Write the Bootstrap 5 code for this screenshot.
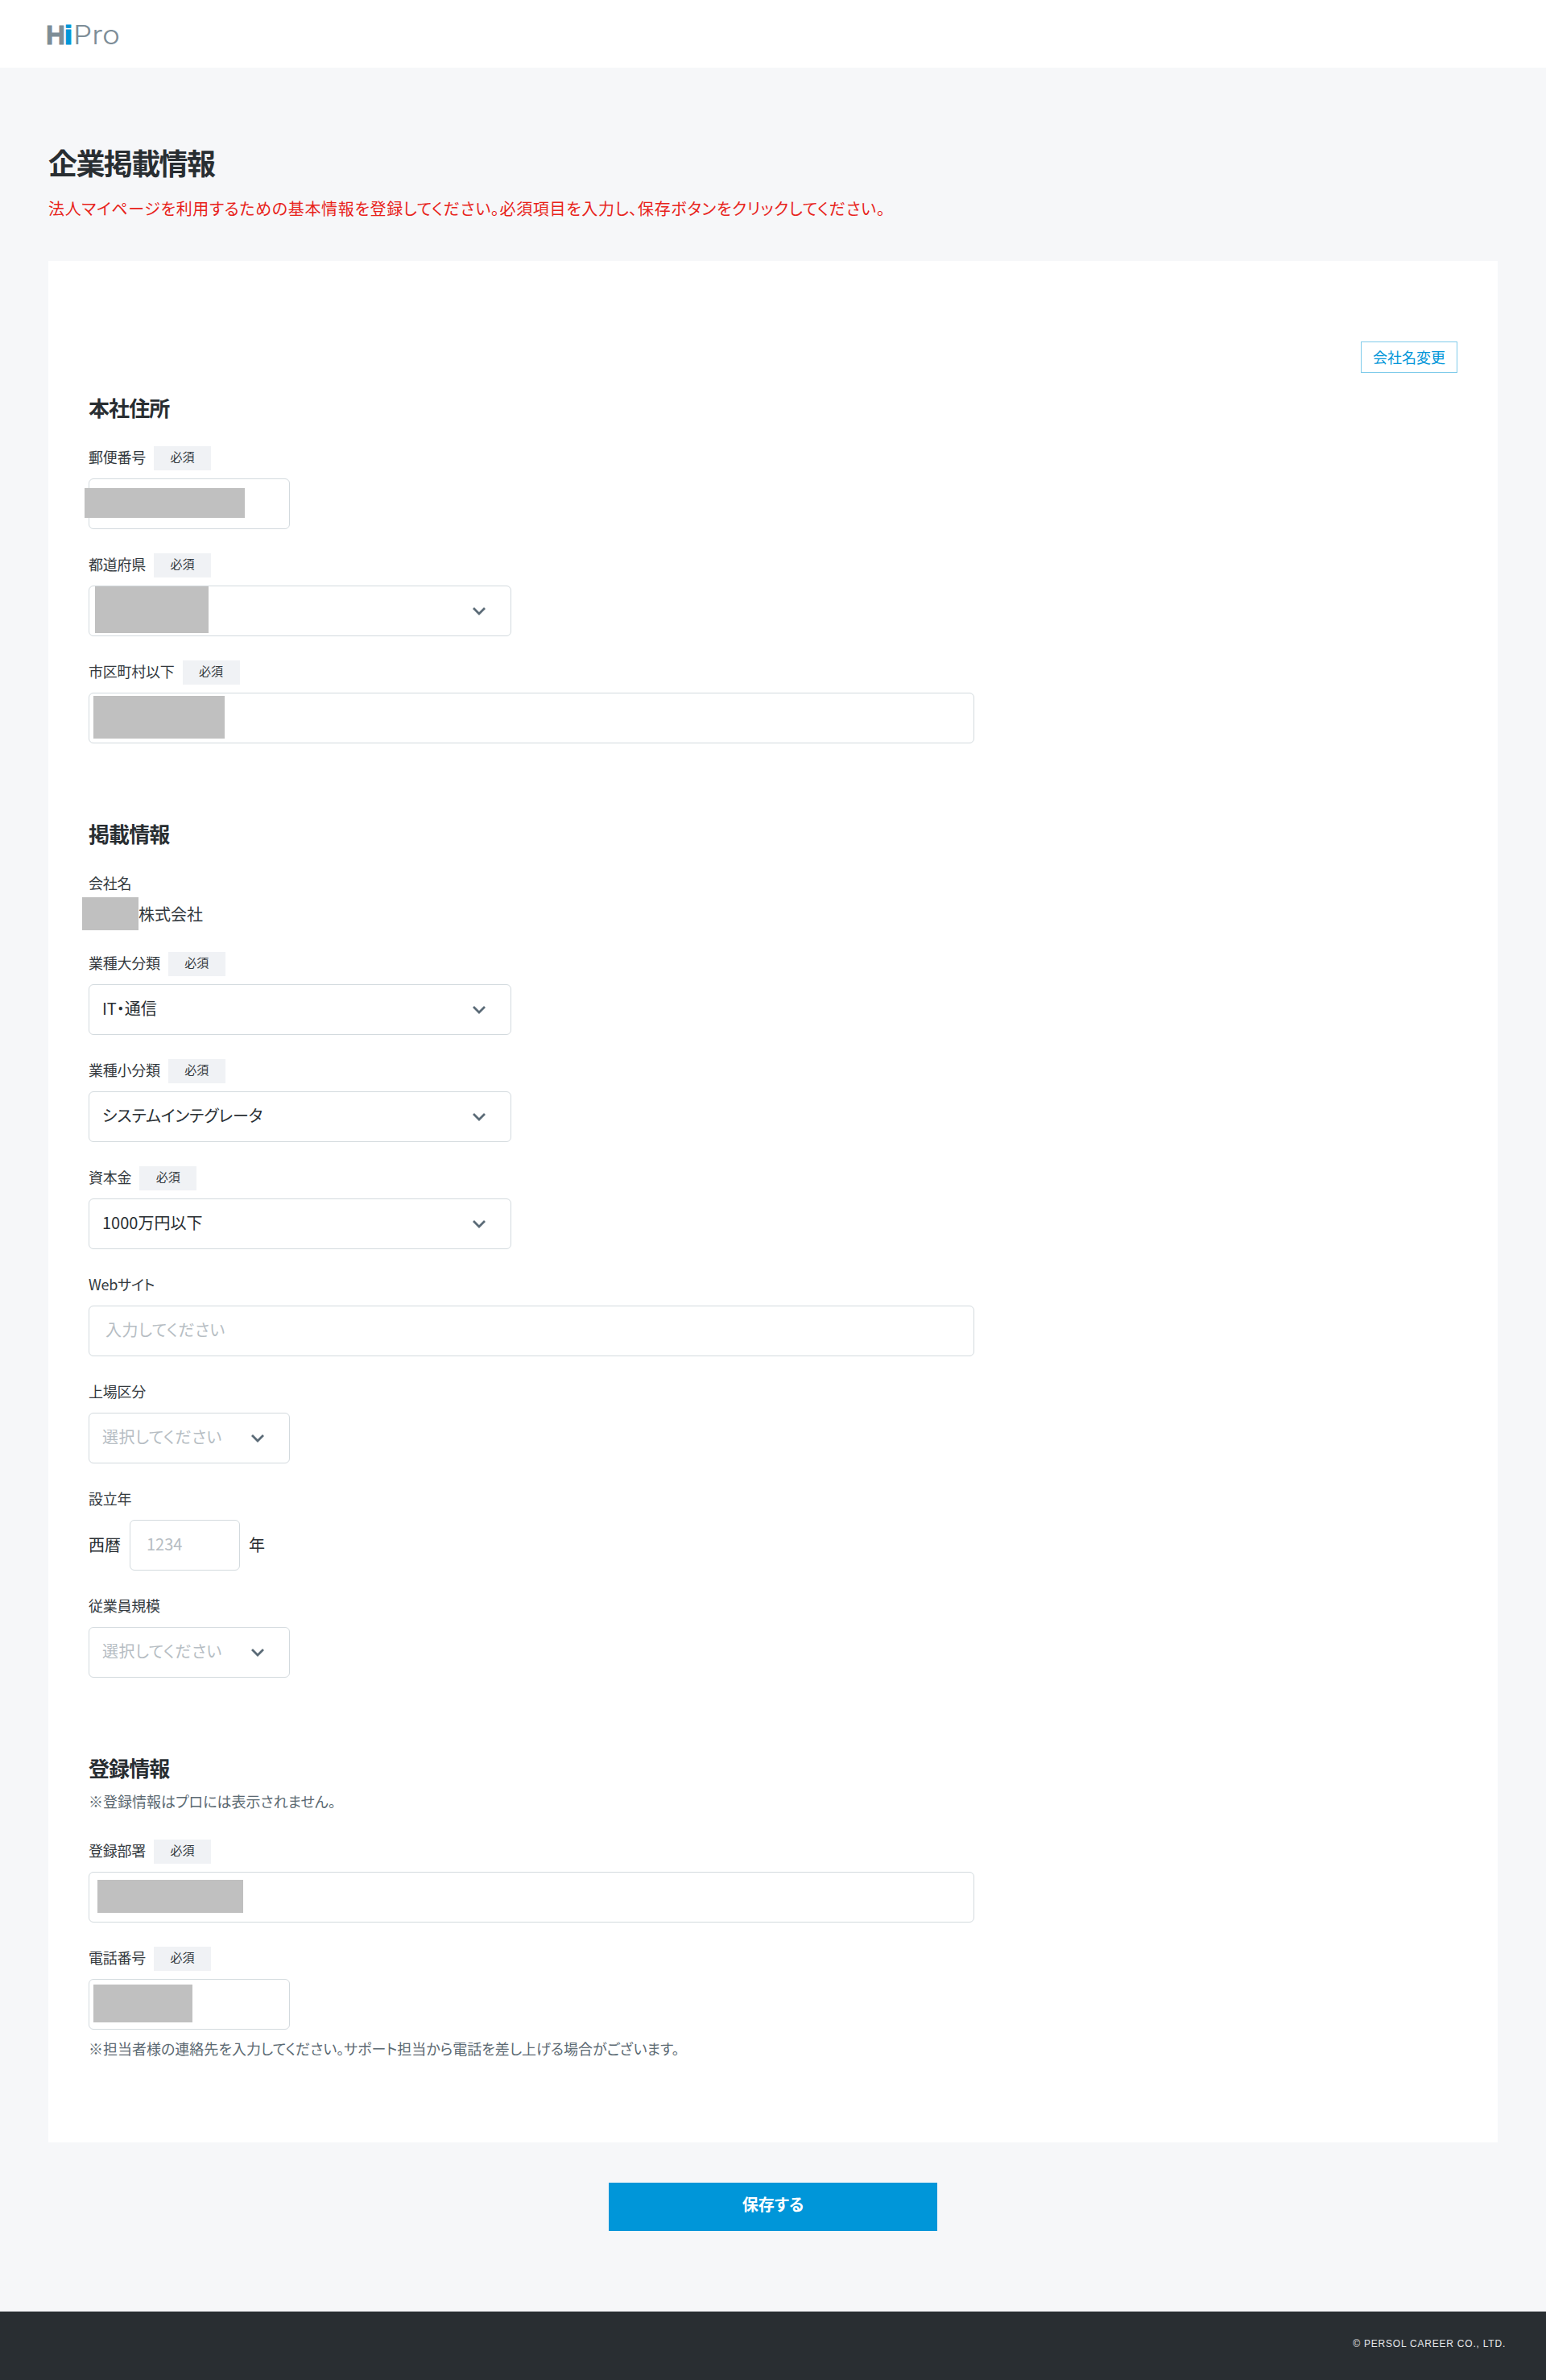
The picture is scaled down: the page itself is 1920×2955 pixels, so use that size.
<!DOCTYPE html>
<html lang="ja">
<head>
<meta charset="utf-8">
<title>企業掲載情報</title>
<link rel="stylesheet" href="https://cdn.jsdelivr.net/npm/bootstrap@5.3.0/dist/css/bootstrap.min.css">
<style>
body{background:#f6f7f9;color:#292e32;font-family:"Noto Sans CJK JP","Liberation Sans",sans-serif;font-feature-settings:"palt";font-size:20px;}
select,input,button{font-feature-settings:"palt";}
.site-head{height:84px;background:#fff;padding:20px 0 0 57px;}
.site-head svg{display:block;}
.page-wrap{padding:0 60px;}
.page-title{font-size:36px;font-weight:700;line-height:50px;letter-spacing:-1.6px;margin:0;padding-top:92px;}
.page-lead{color:#e8231b;font-size:20px;letter-spacing:.68px;line-height:30px;margin:18px 0 50px;}
.form-panel{background:#fff;padding:100px 50px 103px;}
.rename-btn{width:120px;height:39px;padding:0;border:1px solid #7fcbea;border-radius:0;background:#fff;color:#0096d9;font-size:18px;line-height:35px;}
.sect-title{font-size:26px;font-weight:700;letter-spacing:-.9px;line-height:38px;margin:24px 0 29px;}
.sect-title.later{margin-top:93px;}
.sect-title.tight{margin-bottom:9px;}
.field{margin-bottom:30px;}
.field:last-child{margin-bottom:0;}
.field-label{height:30px;margin-bottom:10px;font-size:18px;letter-spacing:-.25px;line-height:27px;gap:10px;color:#33393e;}
.req-tag{width:71px;height:30px;background:#f0f2f5;font-size:15px;letter-spacing:0;line-height:25px;text-align:center;color:#33393e;}
.ctl{position:relative;max-width:100%;}
.w-s{width:250px;}
.w-m{width:525px;}
.w-l{width:1100px;}
.form-control.tall,.form-select.tall{height:63px;border:1px solid #d3dade;border-radius:6px;font-size:20px;color:#292e32;background-color:#fff;box-shadow:none;}
.form-control.tall{padding:0 0 4px 20px;}
.form-control.tall::placeholder{color:#b6bdc3;letter-spacing:.5px;}
.form-select.tall{padding:0 60px 4px 16px;background-image:url("data:image/svg+xml,%3csvg xmlns='http://www.w3.org/2000/svg' viewBox='0 0 16 16'%3e%3cpath fill='none' stroke='%235b6b77' stroke-width='2.8' d='M1 4l7 7 7-7'/%3e%3c/svg%3e");background-size:16px 16px;background-position:right 31px center;}
.form-select.tall.empty{color:#b6bdc3;letter-spacing:.5px;}
.year-input.form-control.tall::placeholder{letter-spacing:0;}
.blackout{position:absolute;background:#c0c0c0;}
.company-val{position:relative;height:31px;line-height:28px;margin-top:-2px;padding-left:62px;color:#33393e;}
.year-row{gap:11px;line-height:61px;}
.year-input{width:137px;}
.help-note{font-size:18px;color:#5b6972;line-height:27px;margin:0;}
.help-note.first{margin-bottom:34px;}
.help-note.last{margin-top:10px;}
.save-btn{display:block;width:408px;height:60px;margin:50px auto 100px;padding:0 0 6px;background:#0096d9;border:0;border-radius:0;color:#fff;font-size:20px;font-weight:700;}
.site-foot{height:85px;background:#292e32;color:#e6e8ea;font-family:"Liberation Sans",sans-serif;font-size:12px;letter-spacing:.78px;padding:0 50px 6px 0;}
</style>
</head>
<body>
<header class="site-head">
<svg width="100" height="44" viewBox="0 0 100 44" role="img" aria-label="HiPro">
<text x="0" y="34.5" font-family="Liberation Sans" font-weight="700" font-size="33" fill="#7d8d97" stroke="#7d8d97" stroke-width=".9" textLength="24" lengthAdjust="spacingAndGlyphs">H</text>
<text x="22.5" y="34.5" font-family="Liberation Sans" font-weight="700" font-size="33" fill="#0096d9" stroke="#0096d9" stroke-width=".9" textLength="11" lengthAdjust="spacingAndGlyphs">i</text>
<text x="34" y="34.5" font-family="Inter" font-weight="300" font-size="33" fill="#7d8d97" textLength="58" lengthAdjust="spacingAndGlyphs">Pro</text>
</svg>
</header>
<main class="page-wrap">
<h1 class="page-title">企業掲載情報</h1>
<p class="page-lead">法人マイページを利用するための基本情報を登録してください。必須項目を入力し、保存ボタンをクリックしてください。</p>
<form class="form-panel">
<div class="d-flex justify-content-end"><button type="button" class="btn rename-btn">会社名変更</button></div>

<h2 class="sect-title">本社住所</h2>
<div class="field">
<div class="field-label d-flex"><span>郵便番号</span><span class="req-tag">必須</span></div>
<div class="ctl w-s"><input class="form-control tall" type="text"><span class="blackout" style="left:-5px;top:12px;width:199px;height:37px"></span></div>
</div>
<div class="field">
<div class="field-label d-flex"><span>都道府県</span><span class="req-tag">必須</span></div>
<div class="ctl w-m"><select class="form-select tall"><option></option></select><span class="blackout" style="left:8px;top:1px;width:141px;height:58px"></span></div>
</div>
<div class="field">
<div class="field-label d-flex"><span>市区町村以下</span><span class="req-tag">必須</span></div>
<div class="ctl w-l"><input class="form-control tall" type="text"><span class="blackout" style="left:6px;top:4px;width:163px;height:53px"></span></div>
</div>

<h2 class="sect-title later">掲載情報</h2>
<div class="field">
<div class="field-label d-flex"><span>会社名</span></div>
<div class="company-val"><span class="blackout" style="left:-8px;top:-7px;width:70px;height:41px"></span>株式会社</div>
</div>
<div class="field">
<div class="field-label d-flex"><span>業種大分類</span><span class="req-tag">必須</span></div>
<div class="ctl w-m"><select class="form-select tall"><option>IT・通信</option></select></div>
</div>
<div class="field">
<div class="field-label d-flex"><span>業種小分類</span><span class="req-tag">必須</span></div>
<div class="ctl w-m"><select class="form-select tall"><option>システムインテグレータ</option></select></div>
</div>
<div class="field">
<div class="field-label d-flex"><span>資本金</span><span class="req-tag">必須</span></div>
<div class="ctl w-m"><select class="form-select tall"><option>1000万円以下</option></select></div>
</div>
<div class="field">
<div class="field-label d-flex"><span>Webサイト</span></div>
<div class="ctl w-l"><input class="form-control tall" type="text" placeholder="入力してください"></div>
</div>
<div class="field">
<div class="field-label d-flex"><span>上場区分</span></div>
<div class="ctl w-s"><select class="form-select tall empty"><option>選択してください</option></select></div>
</div>
<div class="field">
<div class="field-label d-flex"><span>設立年</span></div>
<div class="d-flex year-row"><span>西暦</span><input class="form-control tall year-input" type="text" placeholder="1234"><span>年</span></div>
</div>
<div class="field">
<div class="field-label d-flex"><span>従業員規模</span></div>
<div class="ctl w-s"><select class="form-select tall empty"><option>選択してください</option></select></div>
</div>

<h2 class="sect-title later tight">登録情報</h2>
<p class="help-note first">※登録情報はプロには表示されません。</p>
<div class="field">
<div class="field-label d-flex"><span>登録部署</span><span class="req-tag">必須</span></div>
<div class="ctl w-l"><input class="form-control tall" type="text"><span class="blackout" style="left:11px;top:10px;width:181px;height:41px"></span></div>
</div>
<div class="field">
<div class="field-label d-flex"><span>電話番号</span><span class="req-tag">必須</span></div>
<div class="ctl w-s"><input class="form-control tall" type="text"><span class="blackout" style="left:6px;top:7px;width:123px;height:47px"></span></div>
<p class="help-note last">※担当者様の連絡先を入力してください。サポート担当から電話を差し上げる場合がございます。</p>
</div>
</form>
<button type="button" class="btn save-btn">保存する</button>
</main>
<footer class="site-foot d-flex align-items-center justify-content-end">© PERSOL CAREER CO., LTD.</footer>
<script src="https://cdn.jsdelivr.net/npm/bootstrap@5.3.0/dist/js/bootstrap.bundle.min.js"></script>
</body>
</html>
